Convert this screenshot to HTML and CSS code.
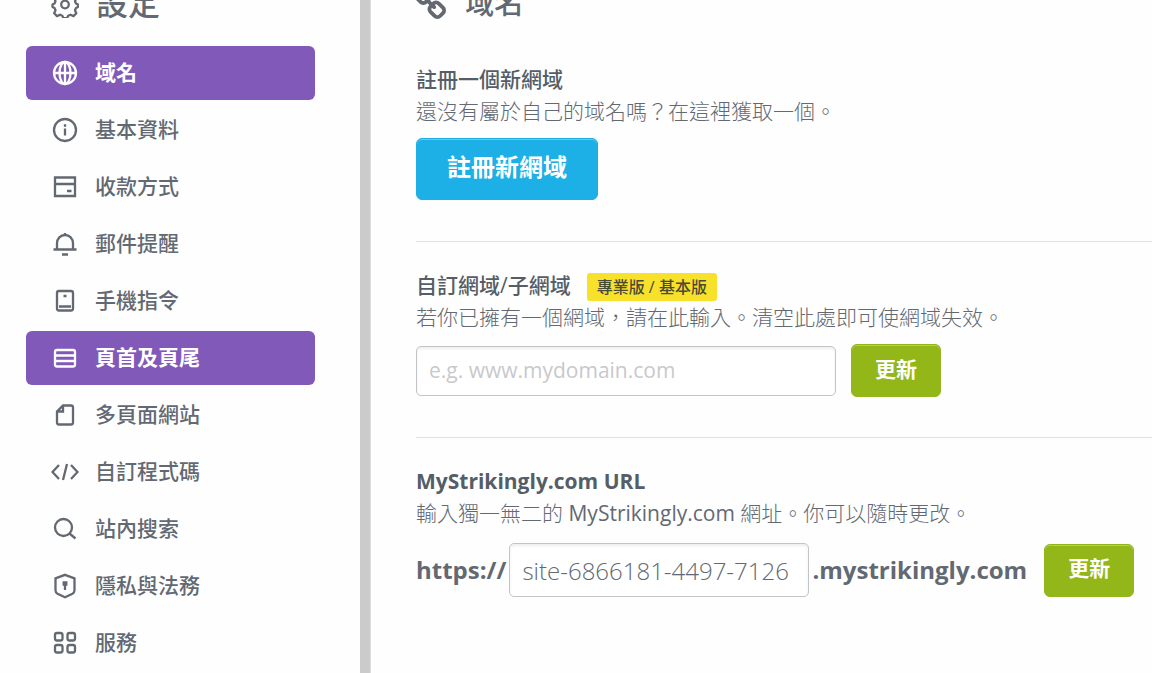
FILE: index.html
```html
<!DOCTYPE html>
<html lang="zh-Hant">
<head>
<meta charset="utf-8">
<meta name="viewport" content="width=device-width, initial-scale=1">
<title>域名設定</title>
<link rel="stylesheet" href="styles.css">
</head>
<body>
<div class="app">
  <aside class="sidebar">
    <h1 class="panel-title sidebar-title">
      <svg class="icon" viewBox="0 0 28 28"><path d="M11.500 2.500h5l1 3.200 2.300 1 2.900-1.500 2.600 3-1.300 3 1 2.300 2 1v2.500l-2 1-1 2.300 1.300 3-2.800 2.800-3-1.400-2.300 1-1.200 2.500h-3.500l-1.200-2.500-2.300-1-3 1.400-2.800-2.800 1.300-3-1-2.300-2-1v-2.500l2-1 1-2.300-1.300-3 2.600-3 2.900 1.500 2.300-1z" stroke-linejoin="round"/><circle cx="14" cy="14.500" r="3.800"/></svg>
      <span>設定</span>
    </h1>
    <nav class="menu">
      <a class="item active" href="#domain"><svg class="icon" viewBox="0 0 28 28"><circle cx="14" cy="14" r="11"/><path d="M3 14h22M14 3v22"/><ellipse cx="14" cy="14" rx="5.500" ry="11"/></svg>域名</a>
      <a class="item" href="#basic"><svg class="icon" viewBox="0 0 28 28"><circle cx="14" cy="14" r="11"/><path d="M14 12.500v7"/><path d="M14 8.200v2.600"/></svg>基本資料</a>
      <a class="item" href="#payment"><svg class="icon" viewBox="0 0 28 28"><path d="M4 4.500h20v18.500h-20zM4 11h20M16 18h4.500"/></svg>收款方式</a>
      <a class="item" href="#email"><svg class="icon" viewBox="0 0 28 28"><path d="M2.500 19.500h23M6 19v-5.500c0-5 3.500-8.500 8-8.500s8 3.500 8 8.500v5.500M14 3v2M11 24.500h6"/></svg>郵件提醒</a>
      <a class="item" href="#mobile"><svg class="icon" viewBox="0 0 28 28"><rect x="6" y="4" width="16" height="19.500" rx="2"/><path d="M8 19.500h12M12.500 9h3"/></svg>手機指令</a>
      <a class="item active" href="#header-footer"><svg class="icon" viewBox="0 0 28 28"><rect x="4" y="6" width="20" height="16.500" rx="2"/><path d="M4 11.500h20M4 17h20"/></svg>頁首及頁尾</a>
      <a class="item" href="#pages"><svg class="icon" viewBox="0 0 28 28"><path d="M12 4.500h8q2 0 2 2v15q0 2-2 2h-12q-2 0-2-2v-11zM12 4.500v6h-6"/></svg>多頁面網站</a>
      <a class="item" href="#code"><svg class="icon" viewBox="0 0 28 28"><path d="M8 7l-6.500 7 6.500 7M20 7l6.500 7-6.500 7M16 6l-4 16"/></svg>自訂程式碼</a>
      <a class="item" href="#search"><svg class="icon" viewBox="0 0 28 28"><circle cx="12.500" cy="12.500" r="8.500"/><path d="M18.500 18.500l6 5"/></svg>站內搜索</a>
      <a class="item" href="#privacy"><svg class="icon" viewBox="0 0 28 28"><path d="M14 2.800l9.500 3.500v12q0 2.500-2 3.500l-7.500 3.500-7.500-3.500q-2-1-2-3.500v-12z"/><path d="M12.700 10.500h2.600v2h-2.600zM14 12v6"/></svg>隱私與法務</a>
      <a class="item" href="#services"><svg class="icon" viewBox="0 0 28 28"><rect x="4" y="4" width="7.500" height="7.500" rx="2"/><rect x="16.500" y="4" width="7.500" height="7.500" rx="2"/><rect x="4" y="16" width="7.500" height="7.500" rx="2"/><rect x="16.500" y="16" width="7.500" height="7.500" rx="2"/></svg>服務</a>
    </nav>
  </aside>
  <main class="content">
    <h2 class="panel-title content-title">
      <svg class="link-icon" viewBox="144 144 1504 1504"><path d="M1456 1216q0-40-28-68l-208-208q-28-28-68-28-42 0-72 32 3 3 19 18.500t21.500 21.500 15 19 13 25.500 3.500 27.500q0 40-28 68t-68 28q-15 0-27.500-3.500t-25.500-13-19-15-21.500-21.500-18.500-19q-33 31-33 73 0 40 28 68l206 207q27 27 68 27 40 0 68-26l147-146q28-28 28-67zm-703-705q0-40-28-68l-206-207q-28-28-68-28-39 0-68 27l-147 146q-28 28-28 67 0 40 28 68l208 208q27 27 68 27 42 0 72-31-3-3-19-18.500t-21.500-21.500-15-19-13-25.500-3.500-27.500q0-40 28-68t68-28q15 0 27.500 3.500t25.500 13 19 15 21.500 21.500 18.500 19q33-31 33-73zm895 705q0 120-85 203l-147 146q-83 83-203 83-121 0-204-85l-206-207q-83-83-83-203 0-123 88-209l-88-88q-86 88-208 88-120 0-204-84l-208-208q-84-84-84-204t85-203l147-146q83-83 203-83 121 0 204 85l206 207q83 83 83 203 0 123-88 209l88 88q86-88 208-88 120 0 204 84l208 208q84 84 84 204z"/></svg>
      <span>域名</span>
    </h2>
    <section class="section">
      <h3 class="heading">註冊一個新網域</h3>
      <p class="hint">還沒有屬於自己的域名嗎？在這裡獲取一個。</p>
      <button class="button button-large" type="button">註冊新網域</button>
    </section>
    <section class="section">
      <h3 class="heading"><label for="custom">自訂網域/子網域</label><span class="badge">專業版 / 基本版</span></h3>
      <p class="hint">若你已擁有一個網域，請在此輸入。清空此處即可使網域失效。</p>
      <form class="row custom-row">
        <input class="field" id="custom" type="text" placeholder="e.g. www.mydomain.com">
        <button class="button" type="button">更新</button>
      </form>
    </section>
    <section class="section">
      <h3 class="heading heading-latin"><label for="site">MyStrikingly.com URL</label></h3>
      <p class="hint">輸入獨一無二的 <span class="latin">MyStrikingly.com</span> 網址。你可以隨時更改。</p>
      <form class="row url-row">
        <span class="affix">https://</span>
        <input class="field url-field" id="site" type="text" value="site-6866181-4497-7126">
        <span class="affix">.mystrikingly.com</span>
        <button class="button" type="button">更新</button>
      </form>
    </section>
  </main>
</div>
</body>
</html>
```
FILE: styles.css
```css
* { box-sizing: border-box; }
body {
  margin: 0;
  background: #fefefe;
  color: #636972;
  font: 21px/32px "Open Sans", "Noto Sans CJK TC", sans-serif;
}
.app {
  display: flex;
  height: 100vh;
  overflow: hidden;
}
.sidebar {
  flex: 0 0 371px;
  padding: 0 55px 0 26px;
  border-right: 1px solid #dedede;
  box-shadow: inset -10px 0 #cbcbcb;
}
.panel-title {
  display: flex;
  align-items: center;
  height: 40px;
  margin: -16px 0 0;
  font-weight: 500;
}
.panel-title span { margin-bottom: 2px; }
.sidebar-title {
  gap: 17px;
  padding-left: 25px;
  margin-bottom: 22px;
  font-size: 32px;
}
.icon {
  flex: none;
  width: 28px;
  height: 28px;
  fill: none;
  stroke: currentColor;
  stroke-width: 2.3;
}
.menu {
  display: flex;
  flex-direction: column;
  gap: 3px;
}
.item {
  display: flex;
  align-items: center;
  gap: 16px;
  height: 54px;
  padding: 0 0 2px 25px;
  border-radius: 6px;
  color: inherit;
  font-weight: 500;
  text-decoration: none;
}
.item .icon { margin-top: 2px; }
.item.active {
  background: #8159b9;
  color: #fff;
  font-weight: 700;
}
.content {
  flex: 1;
  min-width: 0;
  padding-left: 45px;
}
.content-title {
  gap: 19px;
  margin-bottom: 12px;
  font-size: 29px;
}
.link-icon {
  flex: none;
  width: 30px;
  height: 30px;
  fill: currentColor;
}
.section {
  padding: 28px 0 40px;
  border-bottom: 1px solid #dfe1e3;
}
.section:first-of-type { padding-bottom: 41px; }
.section:last-child { border: 0; }
.heading {
  display: flex;
  align-items: flex-end;
  gap: 16px;
  margin: 0;
  color: #555d66;
  font-size: 21px;
  font-weight: 500;
  line-height: 31px;
}
.heading-latin { font-weight: 700; }
.hint {
  margin: 0 0 11px;
  font-weight: 300;
}
.latin { font-weight: 400; }
.badge {
  padding: 0 10px;
  border-radius: 3px;
  background: #f7e12b;
  color: #4b4a32;
  font-size: 16px;
  line-height: 28px;
}
.row {
  display: flex;
  align-items: center;
}
.custom-row { gap: 15px; }
.field {
  flex: 0 1 420px;
  min-width: 0;
  height: 50px;
  padding: 0 12px 2px;
  border: 1px solid #c3c4c8;
  border-radius: 5px;
  background: #fff;
  box-shadow: inset 0 2px 3px #eeeeee;
  color: inherit;
  font: inherit;
}
.field::placeholder { color: #c8c9cb; }
.url-row {
  gap: 3px;
  padding-top: 3px;
}
.url-field {
  flex-basis: 300px;
  height: 54px;
  padding-bottom: 0;
  font-size: 24px;
  font-weight: 300;
}
.affix {
  font-size: 24px;
  font-weight: 700;
}
.button {
  height: 53px;
  padding: 0 23px 4px;
  border: 1px solid #91b51a;
  border-radius: 6px;
  background: #93b719;
  box-shadow: inset 0 1px #b4cd60;
  color: #fff;
  font: inherit;
  font-weight: 700;
}
.button-large {
  height: 62px;
  padding: 0 30px 4px;
  border-color: #1caee4;
  background: #1db0e7;
  box-shadow: inset 0 1px #69c9ee;
  font-size: 24px;
}
.url-row .button { margin-left: 14px; }
```
